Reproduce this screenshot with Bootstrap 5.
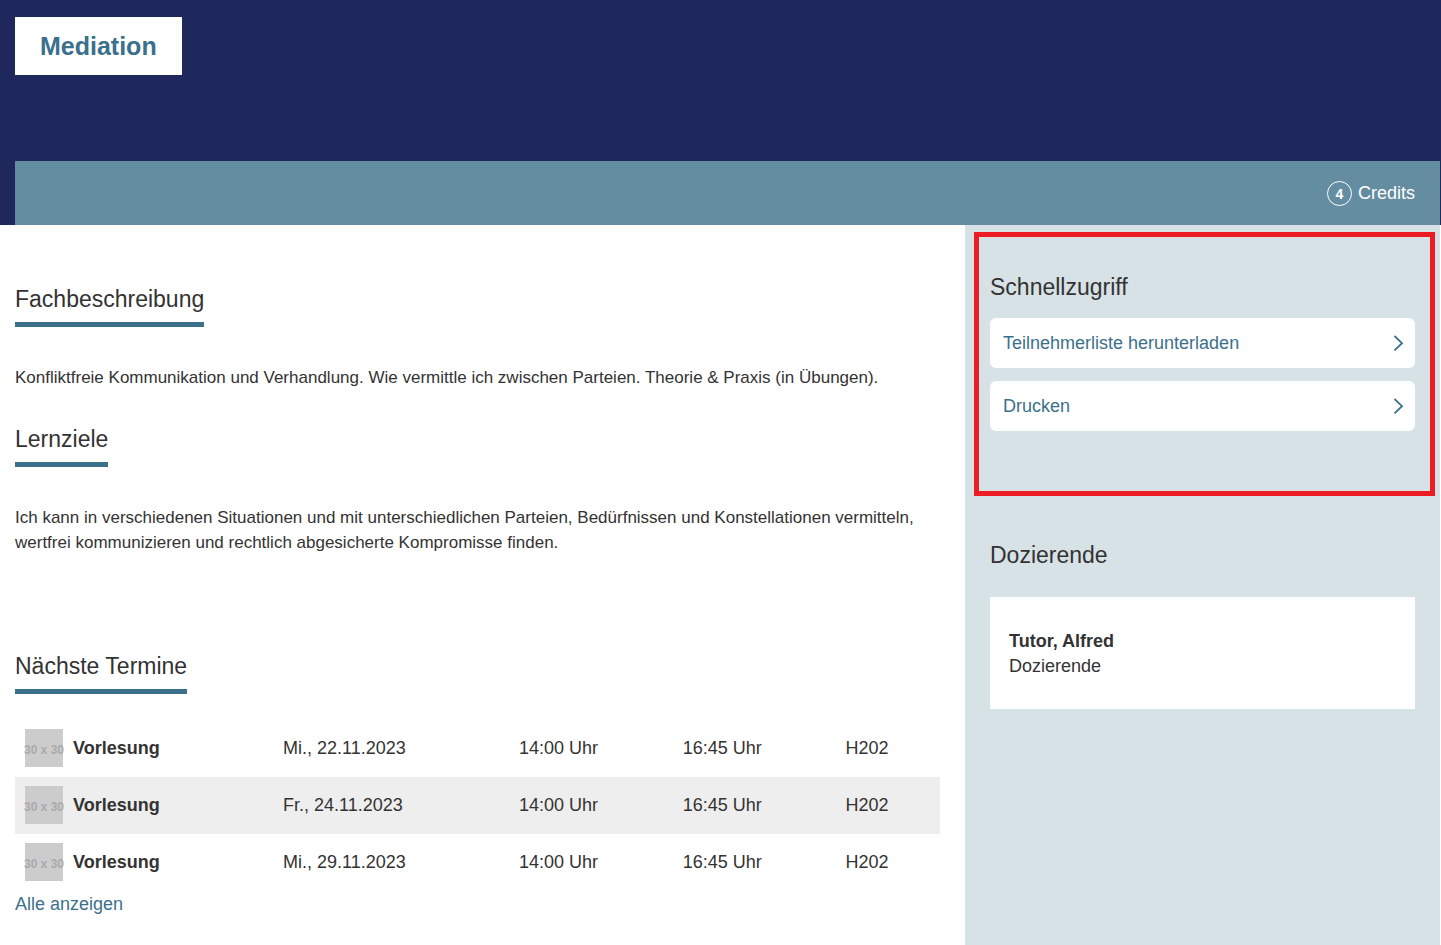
<!DOCTYPE html>
<html lang="de">
<head>
<meta charset="utf-8">
<meta name="viewport" content="width=device-width, initial-scale=1">
<title>Mediation</title>
<link href="https://cdn.jsdelivr.net/npm/bootstrap@5.3.0/dist/css/bootstrap.min.css" rel="stylesheet">
<style>
  :root { --navy: #1f285d; --teal: #648da2; --accent: #3b708b; --mist: #d7e2e6; --signal: #ed1c24; }
  body { font: 18px/25px "Liberation Sans", Arial, sans-serif; color: #333; background: #fff; }
  a { color: var(--accent); text-decoration: none; }
  a:hover { text-decoration: underline; }
  .page-head { background: var(--navy); padding: 17px 1px 0 15px; }
  .page-title { font-size: 25px; line-height: 28px; font-weight: 700; color: var(--accent); background: #fff; padding: 15px 25px; margin: 0 0 86px; }
  .credit-bar { background: var(--teal); color: #fff; min-height: 64px; padding: 0 25px; gap: 6px; }
  .credit-count { width: 25px; height: 25px; border: 1px solid #fff; font-size: 14px; padding-top: 2px; font-weight: 700; }
  .page-main { padding: 0 1px 0 15px; min-height: calc(100vh - 225px); }
  .content { padding: 60px 25px 28px 0; }
  .side { background: var(--mist); padding: 7px 5px 25px 9px; }
  h2 { font-size: 23px; line-height: 28px; font-weight: 400; margin: 0; }
  .ruled { display: table; padding-bottom: 9px; border-bottom: 5px solid var(--accent); margin-bottom: 38px; }
  .content p { font-size: 17px; margin-bottom: 35px; }
  .content .goals { margin-bottom: 97px; }
  .content .dates-title { margin-bottom: 26px; }
  .dates { table-layout: fixed; width: 100%; margin-bottom: 1px; }
  .dates td { padding: 9px 10px 10px; vertical-align: middle; }
  .dates tr:nth-child(even) { background: #eee; }
  .thumb { width: 38px; height: 38px; background: #ccc; color: #aaa; font-size: 12px; line-height: 42px; font-weight: 700; margin-right: 10px; }
  .quick { border: 5px solid var(--signal); padding: 36px 15px 60px 11px; }
  .quick h2 { margin-bottom: 17px; }
  .quick ul { gap: 13px; }
  .quick a { background: #fff; border-radius: 6px; height: 50px; padding: 0 11px 0 13px; }
  .lecturers { padding: 45px 20px 0 16px; }
  .lecturers h2 { margin-bottom: 28px; }
  .person { background: #fff; padding: 32px 19px 30px; }
</style>
</head>
<body>
<header class="page-head">
  <div class="d-flex"><h1 class="page-title">Mediation</h1></div>
  <div class="credit-bar d-flex align-items-center justify-content-end">
    <span class="credit-count rounded-circle d-flex align-items-center justify-content-center">4</span>
    <span>Credits</span>
  </div>
</header>
<div class="page-main d-flex">
  <div class="row g-0 flex-fill">
    <main class="col-8 content">
      <section>
        <h2 class="ruled">Fachbeschreibung</h2>
        <p>Konfliktfreie Kommunikation und Verhandlung. Wie vermittle ich zwischen Parteien. Theorie &amp; Praxis (in Übungen).</p>
      </section>
      <section>
        <h2 class="ruled">Lernziele</h2>
        <p class="goals">Ich kann in verschiedenen Situationen und mit unterschiedlichen Parteien, Bedürfnissen und Konstellationen vermitteln, wertfrei kommunizieren und rechtlich abgesicherte Kompromisse finden.</p>
      </section>
      <section>
        <h2 class="ruled dates-title">Nächste Termine</h2>
        <table class="dates">
          <colgroup><col style="width:27.9%"><col style="width:25.5%"><col style="width:17.7%"><col style="width:17.6%"><col></colgroup>
          <tbody>
            <tr><td><div class="d-flex align-items-center"><span class="thumb d-flex justify-content-center text-nowrap flex-shrink-0">30 x 30</span><strong>Vorlesung</strong></div></td><td>Mi., 22.11.2023</td><td>14:00 Uhr</td><td>16:45 Uhr</td><td>H202</td></tr>
            <tr><td><div class="d-flex align-items-center"><span class="thumb d-flex justify-content-center text-nowrap flex-shrink-0">30 x 30</span><strong>Vorlesung</strong></div></td><td>Fr., 24.11.2023</td><td>14:00 Uhr</td><td>16:45 Uhr</td><td>H202</td></tr>
            <tr><td><div class="d-flex align-items-center"><span class="thumb d-flex justify-content-center text-nowrap flex-shrink-0">30 x 30</span><strong>Vorlesung</strong></div></td><td>Mi., 29.11.2023</td><td>14:00 Uhr</td><td>16:45 Uhr</td><td>H202</td></tr>
          </tbody>
        </table>
        <a href="#">Alle anzeigen</a>
      </section>
    </main>
    <aside class="col-4 side">
      <section class="quick">
        <h2>Schnellzugriff</h2>
        <ul class="list-unstyled d-flex flex-column mb-0">
          <li><a href="#" class="d-flex align-items-center justify-content-between">Teilnehmerliste herunterladen
            <svg width="12" height="18" viewBox="0 0 12 18" fill="none" stroke="currentColor" stroke-width="1.8" aria-hidden="true"><path d="M2.5 2 10 9.2 2.5 16.4"/></svg></a></li>
          <li><a href="#" class="d-flex align-items-center justify-content-between">Drucken
            <svg width="12" height="18" viewBox="0 0 12 18" fill="none" stroke="currentColor" stroke-width="1.8" aria-hidden="true"><path d="M2.5 2 10 9.2 2.5 16.4"/></svg></a></li>
        </ul>
      </section>
      <section class="lecturers">
        <h2>Dozierende</h2>
        <div class="person"><strong class="d-block">Tutor, Alfred</strong>Dozierende</div>
      </section>
    </aside>
  </div>
</div>
<script src="https://cdn.jsdelivr.net/npm/bootstrap@5.3.0/dist/js/bootstrap.bundle.min.js"></script>
</body>
</html>
